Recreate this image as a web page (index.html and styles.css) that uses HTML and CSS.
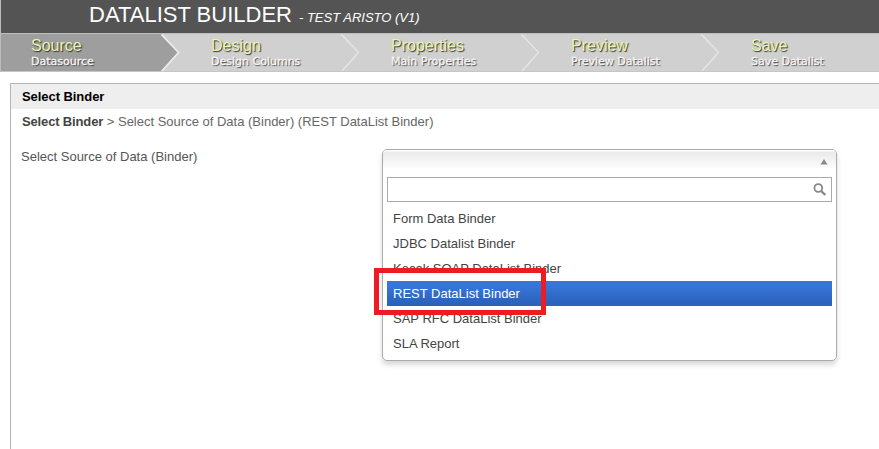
FILE: index.html
```html
<!DOCTYPE html>
<html lang="en">
<head>
<meta charset="utf-8">
<title>Datalist Builder</title>
<link rel="stylesheet" href="styles.css">
</head>
<body>
<div class="builder">
  <header class="header"><h1>DATALIST BUILDER</h1><em>- TEST ARISTO (V1)</em></header>
  <nav class="steps">
    <a class="step active"><span class="title">Source</span><span class="sub">Datasource</span>
      <svg class="arrow" viewBox="0 0 22 38"><path class="tip" d="M0 0L17.5 18.5L0 37z"/><path class="edge" d="M.5 .5L17.5 18.5L1 37"/></svg></a>
    <a class="step"><span class="title">Design</span><span class="sub">Design Columns</span>
      <svg class="arrow" viewBox="0 0 22 38"><path class="edge" d="M.5 .5L17.5 18.5L1 37"/></svg></a>
    <a class="step"><span class="title">Properties</span><span class="sub">Main Properties</span>
      <svg class="arrow" viewBox="0 0 22 38"><path class="edge" d="M.5 .5L17.5 18.5L1 37"/></svg></a>
    <a class="step"><span class="title">Preview</span><span class="sub">Preview Datalist</span>
      <svg class="arrow" viewBox="0 0 22 38"><path class="edge" d="M.5 .5L17.5 18.5L1 37"/></svg></a>
    <a class="step"><span class="title">Save</span><span class="sub">Save Datalist</span></a>
  </nav>
</div>
<main class="panel">
  <h2>Select Binder</h2>
  <p class="crumb"><b>Select Binder</b> &gt; Select Source of Data (Binder) (REST DataList Binder)</p>
  <div class="field">
    <label>Select Source of Data (Binder)</label>
    <div class="select">
      <div class="toggle"><svg width="8" height="6" viewBox="0 0 8 6"><path d="M4 0L7.5 5.5H.5z"/></svg></div>
      <div class="drop">
        <div class="search"><svg width="14" height="14" viewBox="0 0 14 14"><circle cx="5.3" cy="5" r="3.9"/><path class="handle" d="M8.2 8L12.3 12"/></svg></div>
        <ul>
          <li>Form Data Binder</li>
          <li>JDBC Datalist Binder</li>
          <li>Kecak SOAP DataList Binder</li>
          <li class="selected">REST DataList Binder<span class="marker"></span></li>
          <li>SAP RFC DataList Binder</li>
          <li>SLA Report</li>
        </ul>
      </div>
    </div>
  </div>
</main>
</body>
</html>
```
FILE: styles.css
```css
* { box-sizing: border-box; }
body {
  margin: 0;
  height: 449px;
  overflow: hidden;
  display: flex;
  flex-direction: column;
  background: #fff;
  color: #555;
  font: 13px/15px "Liberation Sans", Arial, sans-serif;
}
h1, h2, p, ul { margin: 0; padding: 0; }
.builder { border-left: 1px solid #bbb; height: 72px; flex: none; }
.header {
  height: 33px;
  padding: 2px 0 0 88px;
  display: flex;
  align-items: baseline;
  gap: 7px;
  background: #545454;
  color: #fff;
}
h1 { font-size: 22px; font-weight: 400; line-height: 25px; }
.header em { font-size: 13px; }
.steps {
  display: flex;
  height: 39px;
  background: #d0d0d0;
  border-top: 1px solid #bdbdbd;
  border-bottom: 1px solid #c6c6c6;
}
.step {
  position: relative;
  width: 180px;
  flex: none;
  padding: 3px 0 0 30px;
  display: flex;
  flex-direction: column;
  text-shadow: 1px 1px 1px #333;
}
.active { background: linear-gradient(to right, #9e9e9e 160px, transparent 160px); }
.title { color: #e8f5b0; font-size: 16px; line-height: 17px; }
.sub {
  margin-top: 1px;
  color: #f5f5f5;
  font: 11px/14px "DejaVu Sans", Verdana, sans-serif;
  -webkit-text-stroke: .3px #f5f5f5;
}
.arrow { position: absolute; left: 160px; top: 0; width: 22px; height: 38px; }
.tip { fill: #9e9e9e; }
.edge { fill: none; stroke: #e6e6e6; stroke-width: 1.3; }
.active .edge { stroke: #ececec; stroke-width: 1.8; }
.panel {
  flex: 1;
  margin: 11px 0 0 10px;
  border: solid #b5b5b5;
  border-width: 1px 0 0 1px;
}
h2 {
  height: 25px;
  padding-left: 11px;
  background: #eee;
  color: #000;
  font-size: 13px;
  line-height: 25px;
  letter-spacing: -.06px;
}
.crumb { padding: 5px 0 0 11px; height: 40px; color: #666; }
.crumb b { color: #444; letter-spacing: -.15px; }
.field { display: flex; padding-left: 10px; }
.field label { width: 361px; }
.select {
  width: 455px;
  height: 212px;
  border: 1px solid #aaa;
  border-radius: 5px;
  box-shadow: 0 4px 5px rgba(0, 0, 0, .15);
}
.toggle {
  height: 22px;
  border-radius: 4px 4px 0 0;
  background: linear-gradient(#fff 0, #fff 1px, #eaeaea 2px, #fff 20px);
  display: flex;
  justify-content: flex-end;
  padding: 9px 8px 0 0;
}
.toggle svg { fill: #888; }
.drop { padding: 5px 4px 4px; }
.search {
  height: 25px;
  border: 1px solid #aaa;
  display: flex;
  justify-content: flex-end;
  padding: 5px 4px 0 0;
}
.search svg { fill: none; stroke: #888; stroke-width: 1.8; }
.search .handle { stroke-width: 2.4; }
ul { list-style: none; padding-top: 4px; }
li { height: 25px; padding: 5px 6px; color: #444; }
.selected {
  position: relative;
  color: #fff;
  background: linear-gradient(#3875d7 20%, #2a62bc 90%);
}
.marker {
  position: absolute;
  left: -13px;
  top: -13px;
  width: 172px;
  height: 47px;
  border: 5px solid #ed1c24;
  z-index: 1;
}
```
